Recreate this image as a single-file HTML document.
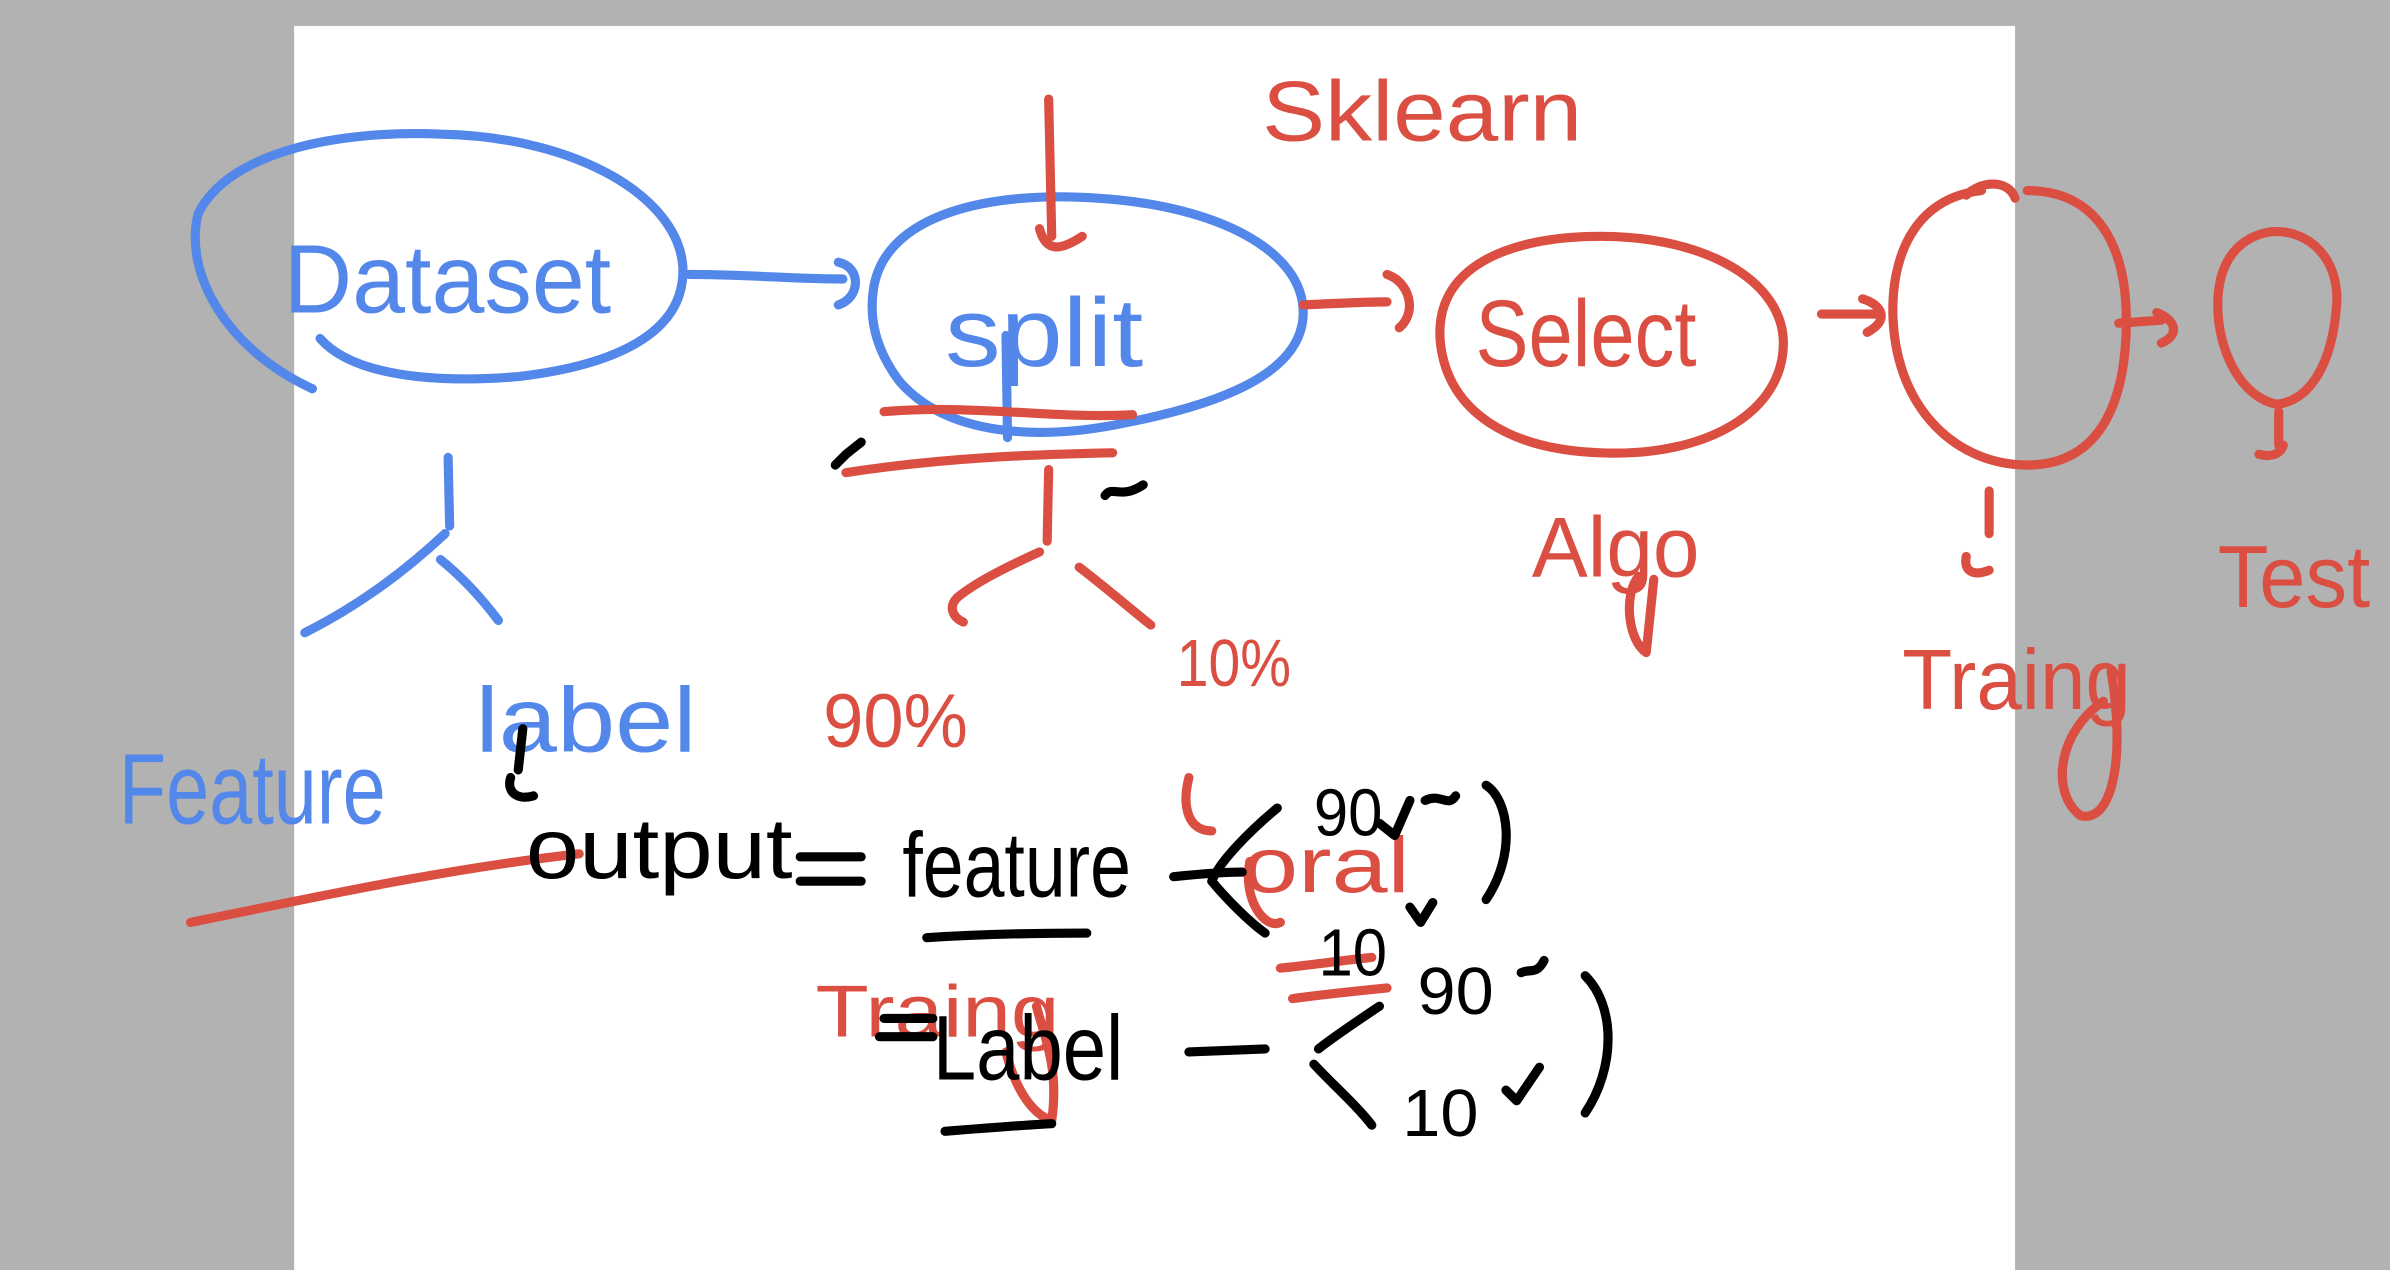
<!DOCTYPE html>
<html><head><meta charset="utf-8"><style>
html,body{margin:0;padding:0;background:#b2b2b2;width:2390px;height:1270px;overflow:hidden}
svg{display:block}
text{font-family:"Liberation Sans",sans-serif;}
</style></head><body>
<svg width="2390" height="1270" viewBox="0 0 1568 833" preserveAspectRatio="none" xmlns="http://www.w3.org/2000/svg">
<rect x="0" y="0" width="1568" height="833" fill="#b2b2b2"/>
<rect x="193" y="17" width="1129" height="816" fill="#ffffff"/>
<g fill="none" stroke-linecap="round" stroke-linejoin="round" stroke-width="6">
<g stroke="#5487ea">
<path d="M205 255 C150 230 120 180 130 140 C150 100 220 85 290 88 C380 90 445 130 448 175 C450 220 400 240 340 247 C280 252 230 245 210 222"/>
<path d="M452 180 C490 180 520 183 553 183 M550 172 C565 175 565 195 550 200"/>
<path d="M573 190 C580 140 650 125 720 130 C800 135 855 165 855 205 C855 245 800 265 740 277 C680 290 620 285 590 250 C575 230 570 210 573 190"/>
<path d="M660 220 L661 287"/>
<path d="M294 300 L295 345 M292 350 C260 380 230 400 200 415 M289 367 C305 380 318 395 327 407"/>
</g>
<g fill="#5487ea" font-size="64" font-family="'Liberation Sans',sans-serif" stroke="none">
<text x="186" y="205" textLength="215" lengthAdjust="spacingAndGlyphs">Dataset</text>
<text x="620" y="240" textLength="130" lengthAdjust="spacingAndGlyphs">split</text>
<text x="312" y="493" textLength="145" lengthAdjust="spacingAndGlyphs" font-size="60">label</text>
<text x="78" y="540" textLength="175" lengthAdjust="spacingAndGlyphs" font-size="66">Feature</text>
</g>
<g stroke="#db4e42">
<path d="M688 65 L690 155 M682 150 C686 165 695 165 710 155"/>
<path d="M580 270 C640 265 690 275 743 272"/>
<path d="M555 310 C620 300 680 298 730 297"/>
<path d="M688 308 L687 355 M682 362 C660 372 640 382 628 392 C622 398 625 405 632 408 M708 372 C725 385 740 398 755 410"/>
<path d="M855 200 C875 199 895 198 910 198 M910 180 C925 185 930 205 918 215"/>
<path d="M945 225 C940 175 990 155 1050 155 C1120 155 1170 185 1170 225 C1170 270 1120 300 1050 297 C990 295 950 270 945 225"/>
<path d="M1195 206 L1230 206 M1222 196 C1235 200 1240 210 1225 218"/>
<path d="M1290 128 C1300 118 1318 118 1322 130 M1300 125 C1255 130 1240 170 1242 210 C1245 270 1285 305 1330 305 C1380 305 1395 260 1395 210 C1395 160 1375 125 1330 125"/>
<path d="M1390 212 L1418 210 M1415 205 C1428 210 1430 220 1418 225"/>
<path d="M1493 265 C1470 260 1455 230 1455 200 C1455 170 1470 155 1490 152 C1515 150 1535 170 1533 200 C1530 240 1515 262 1495 265 M1495 270 L1495 292 M1482 298 C1490 300 1496 298 1498 292"/>
<path d="M1305 322 L1305 350 M1290 365 C1288 375 1295 378 1305 374"/>
<path d="M1380 460 C1350 480 1345 520 1365 535 C1385 540 1395 500 1385 440"/>
<path d="M1075 378 C1065 390 1068 420 1080 428 L1085 380"/>
<path d="M125 605 C200 590 290 570 380 560"/>
<path d="M780 510 C775 530 780 545 795 545 M820 565 C815 590 830 610 840 605"/>
<path d="M840 635 C860 633 880 630 900 628 M848 655 C870 652 890 650 910 648"/>
<path d="M660 690 C665 710 675 730 690 735 C695 700 685 680 680 660"/>
</g>
<g fill="#db4e42" stroke="none" font-family="'Liberation Sans',sans-serif">
<text x="828" y="92" font-size="56" textLength="210" lengthAdjust="spacingAndGlyphs">Sklearn</text>
<text x="968" y="240" font-size="62" textLength="145" lengthAdjust="spacingAndGlyphs">Select</text>
<text x="1005" y="378" font-size="56" textLength="110" lengthAdjust="spacingAndGlyphs">Algo</text>
<text x="772" y="450" font-size="44" textLength="75" lengthAdjust="spacingAndGlyphs">10%</text>
<text x="540" y="490" font-size="50" textLength="95" lengthAdjust="spacingAndGlyphs">90%</text>
<text x="1248" y="465" font-size="56" textLength="150" lengthAdjust="spacingAndGlyphs">Traing</text>
<text x="1455" y="398" font-size="58" textLength="100" lengthAdjust="spacingAndGlyphs">Test</text>
<text x="535" y="680" font-size="48" textLength="160" lengthAdjust="spacingAndGlyphs">Traing</text>
<text x="815" y="585" font-size="52" textLength="110" lengthAdjust="spacingAndGlyphs">oral</text>
</g>
<g stroke="#000">
<path d="M548 305 L555 298 L565 290"/>
<path d="M725 325 C730 318 735 328 750 318"/>
<path d="M343 478 L340 505 M335 510 C332 520 340 525 350 522"/>
<path d="M525 562 L565 562 M525 578 L565 578"/>
<path d="M608 615 C640 613 680 612 713 612"/>
<path d="M770 575 C790 573 805 572 815 572 M838 530 C820 545 800 565 795 578 C805 590 820 605 830 612"/>
<path d="M905 540 L915 548 L925 525 M935 525 C945 520 950 530 955 522 M975 515 C990 525 995 560 975 590"/>
<path d="M925 595 L932 605 L940 592 M580 668 L612 668 M577 680 L612 680 M620 742 C645 740 670 738 690 737"/>
<path d="M780 690 L830 688 M905 660 C890 670 875 680 865 688 M862 698 C875 712 890 725 900 738"/>
<path d="M998 638 C1003 635 1008 640 1013 630 M1040 640 C1060 660 1060 700 1040 730 M988 715 L995 722 L1010 700"/>
</g>
<g fill="#000" stroke="none" font-family="'Liberation Sans',sans-serif">
<text x="345" y="576" font-size="56" textLength="175" lengthAdjust="spacingAndGlyphs">output</text>
<text x="592" y="588" font-size="60" textLength="150" lengthAdjust="spacingAndGlyphs">feature</text>
<text x="862" y="548" font-size="44" textLength="45" lengthAdjust="spacingAndGlyphs">90</text>
<text x="865" y="640" font-size="44" textLength="45" lengthAdjust="spacingAndGlyphs">10</text>
<text x="930" y="665" font-size="44" textLength="50" lengthAdjust="spacingAndGlyphs">90</text>
<text x="612" y="708" font-size="60" textLength="125" lengthAdjust="spacingAndGlyphs">Label</text>
<text x="920" y="745" font-size="44" textLength="50" lengthAdjust="spacingAndGlyphs">10</text>
</g>
</g>
</svg>
</body></html>
